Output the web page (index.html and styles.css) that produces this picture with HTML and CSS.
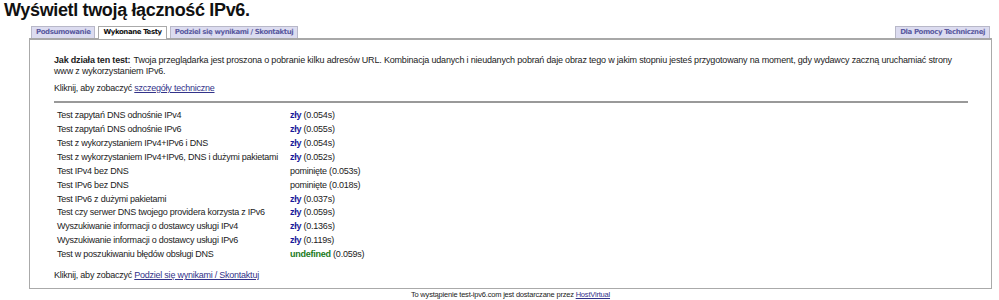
FILE: index.html
```html
<!DOCTYPE html>
<html lang="pl">
<head>
<meta charset="utf-8">
<title>Wyświetl twoją łączność IPv6.</title>
<link rel="stylesheet" href="styles.css">
</head>
<body>
<h1 class="title">Wyświetl twoją łączność IPv6.</h1>
<div class="wrap">
  <div class="tabs">
    <a class="tab">Podsumowanie</a>
    <a class="tab active">Wykonane Testy</a>
    <a class="tab">Podziel się wynikami / Skontaktuj</a>
    <a class="tab right">Dla Pomocy Technicznej</a>
  </div>
  <div class="panel">
    <p class="intro"><b class="lead">Jak działa ten test:</b> Twoja przeglądarka jest proszona o pobranie kilku adresów URL. Kombinacja udanych i nieudanych pobrań daje obraz tego w jakim stopniu jesteś przygotowany na moment, gdy wydawcy zaczną uruchamiać strony www z wykorzystaniem IPv6.</p>
    <p class="line">Kliknij, aby zobaczyć <a href="#" class="link">szczegóły techniczne</a></p>
    <hr class="rule">
    <table class="results">
      <tr><td class="name">Test zapytań DNS odnośnie IPv4</td><td><b class="bad">zły</b> (0.054s)</td></tr>
      <tr><td class="name">Test zapytań DNS odnośnie IPv6</td><td><b class="bad">zły</b> (0.055s)</td></tr>
      <tr><td class="name">Test z wykorzystaniem IPv4+IPv6 i DNS</td><td><b class="bad">zły</b> (0.054s)</td></tr>
      <tr><td class="name">Test z wykorzystaniem IPv4+IPv6, DNS i dużymi pakietami</td><td><b class="bad">zły</b> (0.052s)</td></tr>
      <tr><td class="name">Test IPv4 bez DNS</td><td>pominięte (0.053s)</td></tr>
      <tr><td class="name">Test IPv6 bez DNS</td><td>pominięte (0.018s)</td></tr>
      <tr><td class="name">Test IPv6 z dużymi pakietami</td><td><b class="bad">zły</b> (0.037s)</td></tr>
      <tr><td class="name">Test czy serwer DNS twojego providera korzysta z IPv6</td><td><b class="bad">zły</b> (0.059s)</td></tr>
      <tr><td class="name">Wyszukiwanie informacji o dostawcy usługi IPv4</td><td><b class="bad">zły</b> (0.136s)</td></tr>
      <tr><td class="name">Wyszukiwanie informacji o dostawcy usługi IPv6</td><td><b class="bad">zły</b> (0.119s)</td></tr>
      <tr><td class="name">Test w poszukiwaniu błędów obsługi DNS</td><td><b class="undef">undefined</b> (0.059s)</td></tr>
    </table>
    <p class="line share">Kliknij, aby zobaczyć <a href="#" class="link">Podziel się wynikami / Skontaktuj</a></p>
  </div>
  <p class="footer">To wystąpienie test-ipv6.com jest dostarczane przez <a href="#" class="link">HostVirtual</a></p>
</div>
</body>
</html>
```
FILE: styles.css
```css
html, body {
  margin: 0;
  padding: 0;
  background: #fff;
  color: #222;
  font-family: "Liberation Sans", Arial, sans-serif;
}
body {
  padding: 0 4px;
}
.title {
  margin: 0;
  padding-top: 0;
  font-size: 18px;
  letter-spacing: -0.35px;
  line-height: 20px;
  font-weight: bold;
  color: #111;
}
.wrap {
  margin-left: 25px;
  width: 963px;
}
.tabs {
  display: flex;
  align-items: flex-end;
  gap: 3px;
  padding: 4px 2px 0 2px;
  height: 14px;
}
.tab {
  display: block;
  font-family: "DejaVu Sans", Verdana, sans-serif;
  font-weight: bold;
  font-size: 7px;
  letter-spacing: -0.42px;
  line-height: 11px;
  padding: 0 4px;
  color: #5a5aa0;
  background: #dcdcf0;
  border: 1px solid #b8b8c8;
  border-bottom: none;
}
.tab.active {
  color: #111;
  background: #fff;
  border-color: #aaa;
  position: relative;
  top: 1px;
  height: 12px;
}
.tab.right {
  margin-left: auto;
}
.panel {
  border: 1px solid #aaa;
  border-top: 2px solid #a8a8a8;
  padding: 15px 24px 7px 24px;
  font-size: 9px;
  letter-spacing: -0.24px;
  line-height: 10.5px;
  color: #222;
}
.intro {
  margin: 0;
  max-width: 902px;
  letter-spacing: -0.18px;
}
.lead {
  margin-right: 1px;
}
.line {
  margin: 7px 0 0 0;
}
.link {
  color: #33338a;
  text-decoration: underline;
}
.rule {
  margin: 7px 0 0 0;
  width: 914px;
  border: none;
  border-top: 2px solid #999;
  height: 0;
}
.results {
  margin-top: 6px;
  border-collapse: collapse;
  font-size: 9px;
}
.results td {
  padding: 0 3px;
  height: 13.9px;
  vertical-align: middle;
  white-space: nowrap;
}
.results td.name {
  width: 227px;
}
.bad {
  color: #1a1a9a;
}
.undef {
  color: #1a7a1a;
}
.share {
  margin-top: 9px;
}
.footer {
  margin: 1px 0 0 0;
  text-align: center;
  font-size: 7.5px;
  letter-spacing: -0.2px;
  line-height: 10px;
  color: #222;
}
```
